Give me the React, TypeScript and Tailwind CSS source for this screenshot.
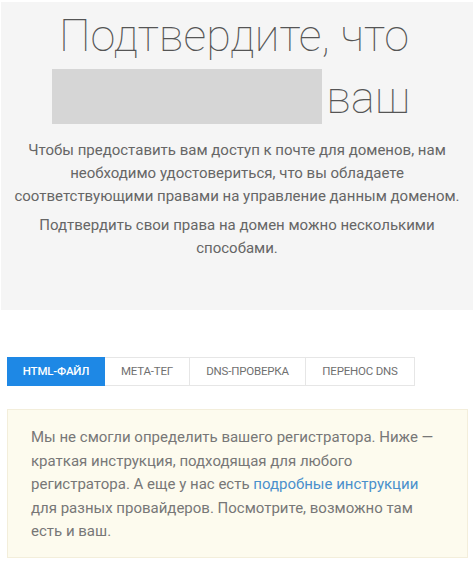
import React from "react";

export default function App() {
  const tabs = ["HTML-ФАЙЛ", "МЕТА-ТЕГ", "DNS-ПРОВЕРКА", "ПЕРЕНОС DNS"];
  const widths = ["w-[98px]", "w-[85px]", "w-[116px]", "w-[109px]"];
  return (
    <div className="w-[474px] h-[569px] bg-white overflow-hidden" style={{ fontFamily: "Roboto, 'Noto Sans', sans-serif" }}>
      <div className="mx-[1px] mt-[2px] h-[308px] bg-[#f5f5f5] flex flex-col items-center pt-[3px]">
        <h1 className="text-[45px] leading-[62px] font-thin text-[#555] text-center">
          <div className="pr-[6px]">Подтвердите, что</div>
          <div className="flex items-center justify-center gap-[4px] pr-[12px]">
            <span className="inline-block w-[270px] h-[55px] bg-[#d6d6d6] mt-[-4px]" />
            <span>ваш</span>
          </div>
        </h1>
        <p className="mt-[10px] text-[15px] leading-[23px] text-[#666] text-center w-[450px]">
          Чтобы предоставить вам доступ к почте для доменов, нам необходимо удостовериться, что вы обладаете соответствующими правами на управление данным доменом.
        </p>
        <p className="mt-[6px] text-[15px] leading-[23px] text-[#666] text-center w-[400px]">
          Подтвердить свои права на домен можно несколькими способами.
        </p>
      </div>
      <div className="ml-[7px] mt-[47px] flex">
        {tabs.map((t, i) => (
          <div
            key={t}
            className={
              (i === 0
                ? "bg-[#1e88e5] text-white font-medium border-[#1e88e5] "
                : "bg-white text-[#707070] border-[#e6e6e6] border-l-0 ") +
              widths[i] +
              " h-[29px] border flex items-center justify-center text-[11.5px] tracking-[-0.2px]"
            }
          >
            {t}
          </div>
        ))}
      </div>
      <div className="mx-[7px] w-[461px] mt-[23px] h-[149px] bg-[#fdfbee] border border-[#f3eedb] pl-[23px] pr-[20px] pt-[16px]">
        <p className="text-[15px] leading-[23.5px] text-[#777]">
          Мы не смогли определить вашего регистратора. Ниже — краткая инструкция, подходящая для любого регистратора. А еще у нас есть{" "}
          <span className="text-[#4a90cc]">подробные инструкции</span> для разных провайдеров. Посмотрите, возможно там есть и ваш.
        </p>
      </div>
    </div>
  );
}
